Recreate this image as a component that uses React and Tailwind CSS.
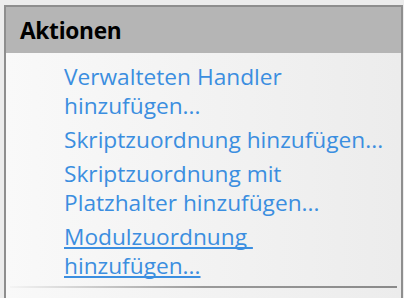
export default function App() {
  const links = [
    { lines: ['Verwalteten Handler', 'hinzufügen...'] },
    { lines: ['Skriptzuordnung hinzufügen...'] },
    { lines: ['Skriptzuordnung mit', 'Platzhalter hinzufügen...'] },
    { lines: ['Modulzuordnung\u00a0', 'hinzufügen...'], hover: true },
  ];

  return (
    <div
      className="w-[404px] h-[298px] overflow-hidden bg-[#ececec] pt-[5px] pl-[4px] pr-[1px]"
      style={{ fontFamily: '"Open Sans", "Noto Sans", sans-serif' }}
    >
      <div className="h-full border-2 border-b-0 border-[#8e8e8e] bg-gradient-to-r from-[#f9f9f9] to-[#ececec] flex flex-col">
        {/* Header */}
        <div className="h-[46px] shrink-0 bg-[#b5b5b5] flex items-center pl-[14px] pt-[2px]">
          <span className="text-[22.7px] font-bold text-black tracking-[-0.3px]">Aktionen</span>
        </div>

        {/* Actions */}
        <div className="flex flex-col gap-[5px] pl-[58px] pt-[9px]">
          {links.map((item, i) => (
            <a
              key={i}
              href="#"
              className={
                'flex flex-col text-[22.7px] leading-[29px] text-[#3b8ee0] ' +
                (item.hover
                  ? 'underline decoration-[2px] underline-offset-[2px] [text-decoration-skip-ink:none]'
                  : 'no-underline')
              }
            >
              {item.lines.map((line, j) => (
                <span key={j} className="whitespace-pre">{line}</span>
              ))}
            </a>
          ))}
        </div>

        {/* Separator */}
        <div className="mt-[6px] ml-[4px] mr-[4px] h-[2px] shrink-0 bg-gradient-to-r from-[#f4f4f4] via-[#9a9a9a] to-[#8a8a8a]" />
      </div>
    </div>
  );
}
